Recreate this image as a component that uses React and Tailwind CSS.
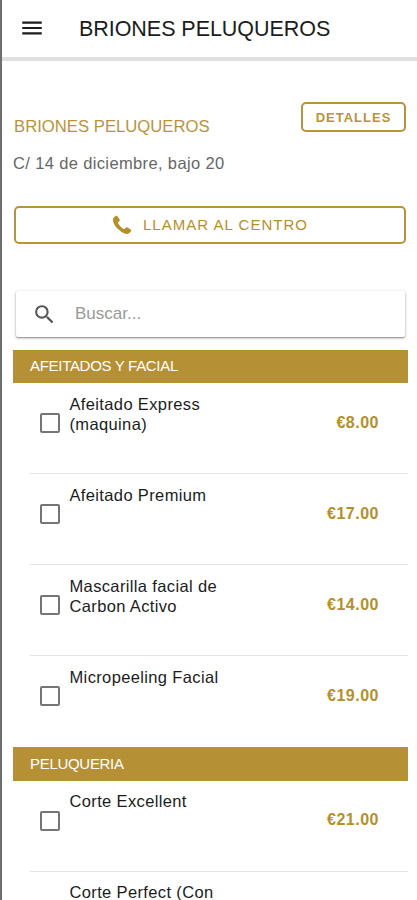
import React, { useState } from "react";
import { MdMenu, MdSearch } from "react-icons/md";

const categories = [
  {
    name: "AFEITADOS Y FACIAL",
    services: [
      { name: "Afeitado Express (maquina)", price: "€8.00" },
      { name: "Afeitado Premium", price: "€17.00" },
      { name: "Mascarilla facial de Carbon Activo", price: "€14.00" },
      { name: "Micropeeling Facial", price: "€19.00" },
    ],
  },
  {
    name: "PELUQUERIA",
    services: [
      { name: "Corte Excellent", price: "€21.00" },
      { name: "Corte Perfect (Con", price: "" },
    ],
  },
];

function PhoneIcon() {
  return (
    <svg viewBox="0 0 20 20" className="h-5 w-5 fill-current">
      <path d="M3.300 1.200C4.100.500 5 .600 5.600 1.400L7.500 4.300C8 5.100 7.800 5.900 7.100 6.500L6.200 7.300C6 7.600 6 8 6.200 8.500C7.300 10.600 9.300 12.700 11.500 13.900C12 14.100 12.300 14.100 12.600 13.800L13.600 12.900C14.200 12.300 15 12.200 15.700 12.600L18.500 14.400C19.300 15 19.400 15.900 18.800 16.600C17.700 18.100 16.100 19.300 14.200 19C11.300 18.500 7.900 16.200 5.400 13.600C3 11.100 1.200 8 1 5.200C.900 3.400 1.800 2.200 3.300 1.200Z" />
    </svg>
  );
}

function ServiceRow({ service, last }) {
  const [checked, setChecked] = useState(false);

  return (
    <div className={`ml-[17px] flex h-[91px] shrink-0 pr-[29px] ${last ? "" : "border-b border-[#e4e4e4]"}`}>
      <button
        aria-pressed={checked}
        onClick={() => setChecked(!checked)}
        className={`mt-[30px] ml-[10px] h-5 w-5 shrink-0 rounded-[2px] border-2 border-[#757575] ${checked ? "bg-[#b69035]" : ""}`}
      />
      <div className="mt-[10.5px] ml-[9.5px] w-[162px] text-[16.5px] leading-5 tracking-[0.36px] text-[#1c1c1c]">
        {service.name}
      </div>
      <div className="mt-[29.5px] ml-auto text-[16px] leading-5 font-bold tracking-[0.5px] text-[#b58f2b]">
        {service.price}
      </div>
    </div>
  );
}

export default function App() {
  return (
    <div className="flex h-[900px] w-[417px] flex-col overflow-hidden border-l-2 border-[#6e6e6e] bg-white font-['Liberation_Sans',Arial,sans-serif]">
      <header className="flex h-[61px] shrink-0 items-center border-b-4 border-[#e0e0e0] pl-[17px]">
        <MdMenu className="mt-[-2px] h-[26px] w-[26px] text-[#1c1c1c]" />
        <h1 className="ml-[34px] text-[21.5px] leading-6 tracking-[-0.05px] whitespace-nowrap text-[#1c1c1c]">BRIONES PELUQUEROS</h1>
      </header>

      <div className="flex shrink-0 justify-between pt-[41px] pr-[11px] pl-[12px]">
        <h2 className="mt-[15px] text-[16.7px] leading-5 text-[#b9933c]">BRIONES PELUQUEROS</h2>
        <button className="h-[30px] w-[105px] rounded-[5px] border-2 border-[#b9933c] text-[13px] leading-none font-bold tracking-[1px] text-[#b9933c]">
          DETALLES
        </button>
      </div>
      <p className="mt-[16px] shrink-0 pl-[11px] text-[16.5px] leading-5 tracking-[0.36px] text-[#666]">
        C/ 14 de diciembre, bajo 20
      </p>

      <button className="mt-[33px] mr-[11px] ml-[12px] flex h-[38px] shrink-0 items-center justify-center gap-[11px] rounded-[5px] border-2 border-[#b9933c] text-[#b58f2b]">
        <PhoneIcon />
        <span className="text-[15px] leading-5 tracking-[1.03px]">LLAMAR AL CENTRO</span>
      </button>

      <label className="mt-[47px] mr-[12px] ml-[14px] flex h-[46px] shrink-0 items-center rounded-[2px] pl-[16px] shadow-[0_1px_3px_rgba(0,0,0,0.35),0_1px_1px_rgba(0,0,0,0.2)]">
        <MdSearch className="h-[25px] w-[25px] text-[#555]" />
        <input
          placeholder="Buscar..."
          className="ml-[18px] w-[250px] text-[17px] outline-none placeholder:text-[#999]"
        />
      </label>

      <div className="mt-[13px] mr-[9px] ml-[11px] flex flex-col">
        {categories.map((category) => (
          <div key={category.name} className="flex shrink-0 flex-col">
            <div className="flex h-[33.3px] shrink-0 items-center bg-[#b69035] pl-[17px] text-[15px] tracking-[-0.3px] text-white">
              {category.name}
            </div>
            {category.services.map((service, index) => (
              <ServiceRow
                key={service.name}
                service={service}
                last={index === category.services.length - 1}
              />
            ))}
          </div>
        ))}
      </div>
    </div>
  );
}
